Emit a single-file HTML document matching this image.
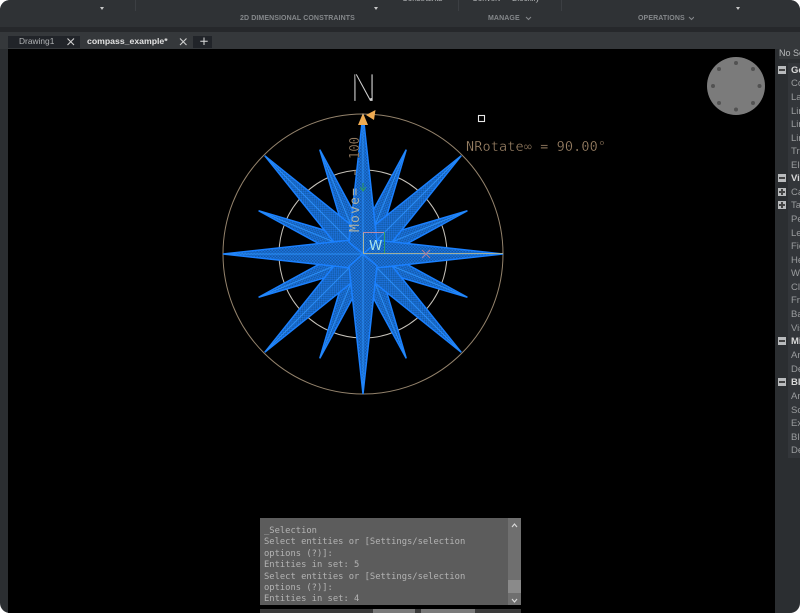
<!DOCTYPE html>
<html>
<head>
<meta charset="utf-8">
<style>
html,body{margin:0;padding:0;width:800px;height:614px;background:#fff;overflow:hidden}
#w{position:absolute;left:0;top:0;width:800px;height:613px;border-radius:10px;overflow:hidden;background:#2b2e31;font-family:"Liberation Sans",sans-serif}
.a{position:absolute;white-space:nowrap}
.lab{font-size:7px;font-weight:bold;color:#85888b;letter-spacing:.1px;top:14px;line-height:9px}
.sep{position:absolute;top:0;width:1px;height:11px;background:#3c3f43}
.dn{position:absolute;top:7px;width:0;height:0;border-left:2px solid transparent;border-right:2px solid transparent;border-top:3px solid #c8c8c8}
.r{position:absolute;left:791px;font-size:9.5px;line-height:13px;color:#9a9c9e;white-space:nowrap;width:20px;overflow:visible}
.h{color:#d8d8d8;font-weight:bold}
.b{position:absolute;left:778px;width:8px;height:8px;background:#b9bbbd}
.b:after{content:"";position:absolute;left:1px;top:3px;width:6px;height:1.5px;background:#444}
.p:before{content:"";position:absolute;left:3.3px;top:1px;width:1.5px;height:6px;background:#444}
#cmd{position:absolute;left:260px;top:518px;width:248px;height:87px;background:#5c5c5c}
#cmd pre{margin:0;position:absolute;left:4px;top:8px;font:8.8px/11.4px "DejaVu Sans Mono","Liberation Mono",monospace;color:#b4b4b4}
</style>
</head>
<body>
<div id="w">
  <!-- ribbon -->
  <div class="a" style="left:0;top:0;width:800px;height:27px;background:#2f3235"></div>
  <div class="a" style="left:0;top:27px;width:800px;height:5px;background:#26282b"></div>
  <div class="a" style="left:0;top:32px;width:800px;height:17px;background:#35383b"></div>
  <div class="sep" style="left:135px"></div>
  <div class="sep" style="left:458px"></div>
  <div class="sep" style="left:561px"></div>
  <div class="dn" style="left:100px"></div>
  <div class="dn" style="left:374px"></div>
  <div class="dn" style="left:736px"></div>
  <div class="a lab" style="left:240px">2D DIMENSIONAL CONSTRAINTS</div>
  <div class="a lab" style="left:488px">MANAGE</div>
  <div class="a lab" style="left:638px">OPERATIONS</div>
  <svg class="a" style="left:524px;top:15px" width="170" height="8"><path d="M2 2l2.500 2.500L7 2M165 2l2.500 2.500L170 2" fill="none" stroke="#85888b"/></svg>
  <div class="a" style="left:402px;top:-6px;font-size:8px;line-height:10px;color:#b5b7b9">Constraints</div>
  <div class="a" style="left:472px;top:-6px;font-size:8px;line-height:10px;color:#b5b7b9">Convert</div>
  <div class="a" style="left:512px;top:-6px;font-size:8px;line-height:10px;color:#b5b7b9">Blockify</div>

  <!-- tabs -->
  <div class="a" style="left:8px;top:36px;width:72px;height:12px;background:#212429"></div>
  <div class="a" style="left:193px;top:36px;width:19px;height:12px;background:#212429"></div>
  <div class="a" style="left:19px;top:35px;font-size:8.4px;line-height:12px;color:#b0b2b4">Drawing1</div>
  <div class="a" style="left:87px;top:35px;font-size:8.7px;line-height:12px;font-weight:bold;color:#e2e2e2">compass_example*</div>
  <svg class="a" style="left:60px;top:36px" width="150" height="12">
    <path d="M7.500 2.500l6.500 6.500m0-6.500l-6.500 6.500M120 2.500l6.500 6.500m0-6.500l-6.500 6.500" stroke="#cfcfcf" fill="none" stroke-width="1.100"/>
    <path d="M144 1.500v7.500m-3.700-3.700h7.400" stroke="#dcdcdc" fill="none" stroke-width="1"/>
  </svg>

  <!-- canvas -->
  <div class="a" style="left:8px;top:49px;width:767px;height:564px;background:#000"></div>
  <svg class="a" style="left:0;top:0" width="800" height="614" viewBox="0 0 800 614">
    <defs>
      <pattern id="m" width="3" height="3" patternUnits="userSpaceOnUse">
        <rect width="3" height="3" fill="#1c72de"/>
        <rect x="0" y="0" width="1.500" height="1.500" fill="#135aa8"/>
        <rect x="1.500" y="1.500" width="1.500" height="1.500" fill="#155fae"/>
      </pattern>
      <g id="c"><polygon points="0,-140 14,-12 0,0 -14,-12" fill="url(#m)" stroke="#1a80ff" stroke-width="1.500"/><line x1="0" y1="0" x2="0" y2="-138" stroke="#2a8df5" stroke-width="1"/></g>
      <g id="d"><polygon points="0,-139 12,-30 0,0 -12,-30" fill="url(#m)" stroke="#1a80ff" stroke-width="1.500"/><line x1="0" y1="0" x2="0" y2="-137" stroke="#2a8df5" stroke-width="1"/></g>
      <g id="s"><polygon points="0,-113 8,-38 0,0 -8,-38" fill="url(#m)" stroke="#1a80ff" stroke-width="1.500"/><line x1="0" y1="0" x2="0" y2="-111" stroke="#2a8df5" stroke-width="1"/></g>
    </defs>
    <circle cx="363" cy="254" r="140" fill="none" stroke="#94836c" stroke-width="1"/>
    <circle cx="363" cy="254" r="84" fill="none" stroke="#c8c4bc" stroke-width="1"/>
    <g transform="translate(363 254)">
      <use href="#s" transform="rotate(22.5)"/><use href="#s" transform="rotate(67.500)"/>
      <use href="#s" transform="rotate(112.500)"/><use href="#s" transform="rotate(157.500)"/>
      <use href="#s" transform="rotate(202.500)"/><use href="#s" transform="rotate(247.500)"/>
      <use href="#s" transform="rotate(292.500)"/><use href="#s" transform="rotate(337.500)"/>
      <use href="#d" transform="rotate(45)"/><use href="#d" transform="rotate(135)"/>
      <use href="#d" transform="rotate(225)"/><use href="#d" transform="rotate(315)"/>
      <use href="#c" transform="rotate(90)"/><use href="#c" transform="rotate(270)"/>
      <use href="#c" transform="rotate(180)"/><use href="#c"/>
    </g>
    <!-- gizmo -->
    <path d="M363.500 254V232" stroke="#a8b4a0" fill="none"/>
    <path d="M363 232.500h22" stroke="#b88aa8" fill="none"/>
    <path d="M384.500 232v22" stroke="#2f9c62" fill="none"/>
    <path d="M363 253.500H503" stroke="#9fae9e" fill="none" stroke-width="1"/>
    <path d="M422 250l8 8m0-8l-8 8" stroke="#b0809c" fill="none"/>
    <path d="M360 187l3 4 3-4M363 191v-8" stroke="#2f9c62" fill="none"/>
    <polygon points="363,113 358,125 368,125" fill="#efab52"/>
    <polygon points="375.500,110 366,115 374,120" fill="#efab52"/>
    <rect x="478.500" y="115.500" width="6" height="6" fill="none" stroke="#e8e8e8" stroke-width="1.100"/>
    <!-- nav cube -->
    <circle cx="736" cy="86" r="29" fill="#7b7b7b"/>
    <g fill="#525252">
      <circle cx="736" cy="63" r="2"/><circle cx="736" cy="109.500" r="2"/><circle cx="713" cy="86" r="2"/><circle cx="759.500" cy="86" r="2"/>
      <circle cx="719" cy="69" r="2"/><circle cx="753" cy="69" r="2"/><circle cx="719" cy="103" r="2"/><circle cx="753" cy="103" r="2"/>
    </g>
    <!-- text -->
    <text x="350.500" y="102" font-family="Liberation Sans" font-size="42" fill="#d0d0d0" stroke="#000" stroke-width="2.200" textLength="26" lengthAdjust="spacingAndGlyphs">N</text>
    <text x="466" y="151" font-family="DejaVu Sans Mono" font-size="13.500" fill="#a58a6c" stroke="#000" stroke-width=".35" textLength="140" lengthAdjust="spacing">NRotate∞ = 90.00°</text>
    <text transform="translate(359 159) rotate(-90)" font-family="DejaVu Sans Mono" font-size="13" fill="#a58a6c" stroke="#000" stroke-width=".3" textLength="22" lengthAdjust="spacingAndGlyphs">100</text>
    <text transform="translate(359 232) rotate(-90)" font-family="DejaVu Sans Mono" font-size="13" fill="#a9b0a8" textLength="44">Move=</text>
    <text x="369" y="250" font-family="DejaVu Sans" font-size="13.500" fill="#a8e4e8">W</text>
    <path d="M355 170v5" stroke="#a58a6c"/>
  </svg>

  <!-- properties -->
  <div class="a" style="left:779px;top:47px;font-size:9px;line-height:12px;color:#b8babc;background:#35383b;width:21px;padding-left:0;overflow:hidden">No Selection</div>
  <div class="a" style="left:788px;top:63px;width:12px;height:395px;background:#33363a"></div>
  <div class="b" style="top:66px"></div><div class="b" style="top:174px"></div>
  <div class="b p" style="top:188px"></div><div class="b p" style="top:201px"></div>
  <div class="b" style="top:337px"></div><div class="b" style="top:378px"></div>
  <div class="r h" style="top:64px">General</div>
  <div class="r" style="top:77px">Color</div>
  <div class="r" style="top:91px">Layer</div>
  <div class="r" style="top:105px">Linetype</div>
  <div class="r" style="top:118px">Linetype scale</div>
  <div class="r" style="top:132px">Lineweight</div>
  <div class="r" style="top:145px">Transparency</div>
  <div class="r" style="top:159px">Elevation</div>
  <div class="r h" style="top:172px">View</div>
  <div class="r" style="top:186px">Camera</div>
  <div class="r" style="top:199px">Target</div>
  <div class="r" style="top:213px">Perspective</div>
  <div class="r" style="top:227px">Lens length</div>
  <div class="r" style="top:240px">Field of view</div>
  <div class="r" style="top:254px">Height</div>
  <div class="r" style="top:267px">Width</div>
  <div class="r" style="top:281px">Clip</div>
  <div class="r" style="top:294px">Front clip</div>
  <div class="r" style="top:308px">Back clip</div>
  <div class="r" style="top:322px">Visual style</div>
  <div class="r h" style="top:335px">Misc</div>
  <div class="r" style="top:349px">Annotative</div>
  <div class="r" style="top:363px">Default</div>
  <div class="r h" style="top:376px">Block</div>
  <div class="r" style="top:390px">Angle</div>
  <div class="r" style="top:404px">Scale</div>
  <div class="r" style="top:417px">Extrusion</div>
  <div class="r" style="top:431px">Block</div>
  <div class="r" style="top:444px">Description</div>

  <!-- command window -->
  <div id="cmd"><pre>_Selection
Select entities or [Settings/selection
options (?)]:
Entities in set: 5
Select entities or [Settings/selection
options (?)]:
Entities in set: 4</pre></div>
  <div class="a" style="left:508px;top:518px;width:13px;height:87px;background:#6f6f6f"></div>
  <div class="a" style="left:508px;top:580px;width:13px;height:13px;background:#8a8a8a"></div>
  <svg class="a" style="left:508px;top:518px" width="13" height="87"><path d="M4 9l2.500-3L9 9M4 81l2.500 3L9 81" fill="none" stroke="#d8d8d8" stroke-width="1.200"/></svg>
  <div class="a" style="left:260px;top:609px;width:261px;height:4px;background:#3a3a3a"></div>
  <div class="a" style="left:373px;top:609px;width:42px;height:4px;background:#7a7a7a"></div>
  <div class="a" style="left:421px;top:609px;width:54px;height:4px;background:#7a7a7a"></div>
</div>
</body>
</html>
